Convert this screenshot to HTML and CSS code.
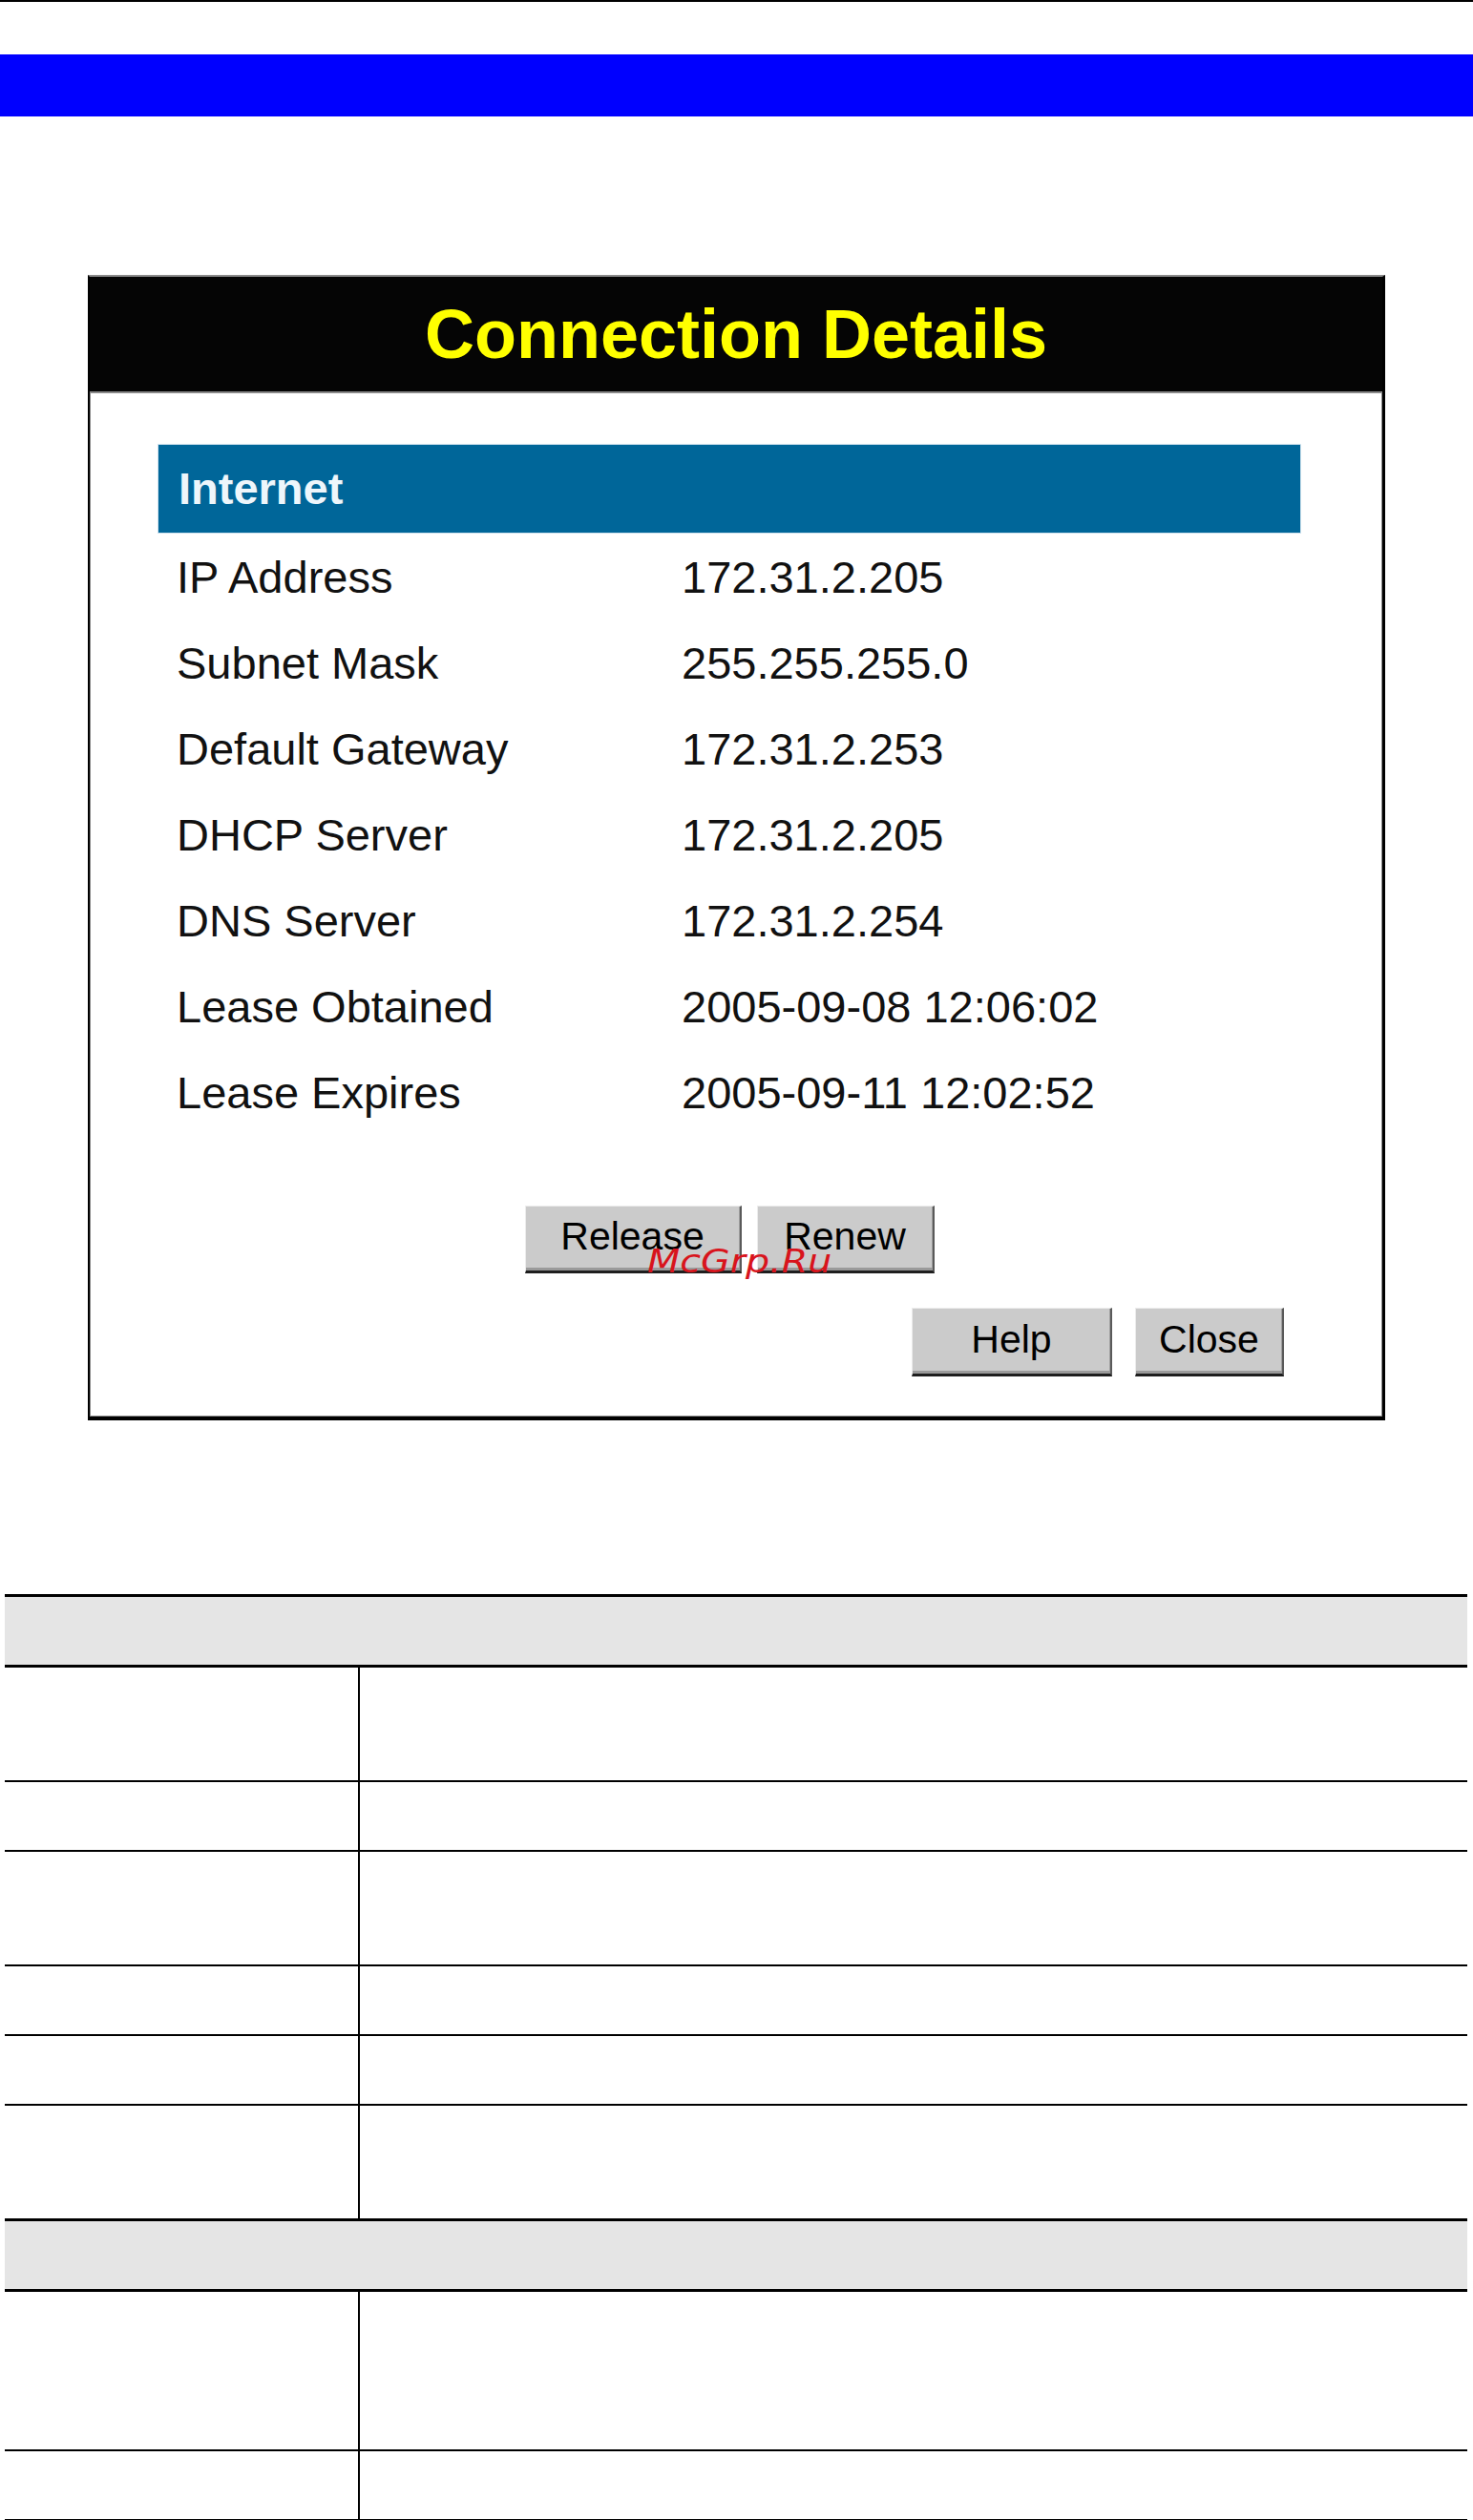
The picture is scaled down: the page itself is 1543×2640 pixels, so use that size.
FILE: index.html
```html
<!DOCTYPE html>
<html lang="en">
<head>
<meta charset="utf-8">
<title>Connection Details</title>
<link rel="stylesheet" href="styles.css">
</head>
<body>
<div class="topline"></div>
<div class="banner"></div>

<div class="dialog">
  <div class="dlg-head">Connection Details</div>
  <div class="dlg-body">
    <div class="section-bar">Internet</div>
    <div class="info">
      <div class="info-row"><span>IP Address</span><span>172.31.2.205</span></div>
      <div class="info-row"><span>Subnet Mask</span><span>255.255.255.0</span></div>
      <div class="info-row"><span>Default Gateway</span><span>172.31.2.253</span></div>
      <div class="info-row"><span>DHCP Server</span><span>172.31.2.205</span></div>
      <div class="info-row"><span>DNS Server</span><span>172.31.2.254</span></div>
      <div class="info-row"><span>Lease Obtained</span><span>2005-09-08 12:06:02</span></div>
      <div class="info-row"><span>Lease Expires</span><span>2005-09-11 12:02:52</span></div>
    </div>
    <div class="btn-row btn-row-center">
      <button class="btn btn-release">Release</button>
      <button class="btn btn-renew">Renew</button>
      <span class="watermark">McGrp.Ru</span>
    </div>
    <div class="btn-row btn-row-right">
      <button class="btn btn-help">Help</button>
      <button class="btn btn-close">Close</button>
    </div>
  </div>
</div>

<div class="spec">
  <div class="spec-head"></div>
  <div class="spec-row lines-2"><div class="c1"></div><div class="c2"></div></div>
  <div class="spec-row lines-1"><div class="c1"></div><div class="c2"></div></div>
  <div class="spec-row lines-2"><div class="c1"></div><div class="c2"></div></div>
  <div class="spec-row lines-1"><div class="c1"></div><div class="c2"></div></div>
  <div class="spec-row lines-1"><div class="c1"></div><div class="c2"></div></div>
  <div class="spec-row lines-2"><div class="c1"></div><div class="c2"></div></div>
  <div class="spec-head"></div>
  <div class="spec-row lines-3"><div class="c1"></div><div class="c2"></div></div>
  <div class="spec-row lines-1"><div class="c1"></div><div class="c2"></div></div>
</div>
</body>
</html>
```
FILE: styles.css
```css
* { box-sizing: border-box; }

html, body {
  margin: 0;
  padding: 0;
  background: #ffffff;
  font-family: "Liberation Sans", Arial, sans-serif;
  color: #000;
}

.topline {
  height: 2px;
  background: #000;
}

.banner {
  margin-top: 55px;
  height: 65px;
  background: #0000ff;
}

/* ---------- dialog ---------- */
.dialog {
  margin: 166px 0 0 92px;
  width: 1359px;
  height: 1200px;
  border-top: 2px solid #8a8a8a;
  border-left: 2px solid #000;
  border-right: 3px solid #000;
  border-bottom: 4px solid #000;
  background: #fff;
  box-shadow: inset 1px 0 0 #8a8a8a, inset -1px -1px 0 #8a8a8a;
  display: flex;
  flex-direction: column;
}

.dlg-head {
  height: 122px;
  background: #050505;
  border-bottom: 2px solid #8a8a8a;
  color: #ffff00;
  font-weight: bold;
  font-size: 72px;
  line-height: 120px;
  text-align: center;
}

.dlg-body {
  padding: 53px 85px 0 71px;
  display: flex;
  flex-direction: column;
}

.section-bar {
  height: 94px;
  background: #006699;
  border: 1px solid #cfe2ee;
  color: #eef6fb;
  font-weight: bold;
  font-size: 47px;
  line-height: 92px;
  padding-left: 21px;
}

.info {
  margin-top: 1px;
  display: flex;
  flex-direction: column;
}

.info-row {
  display: grid;
  grid-template-columns: 529px 1fr;
  padding-left: 20px;
  height: 90px;
  font-size: 47px;
  line-height: 90px;
  color: #111;
}

/* ---------- buttons ---------- */
.btn-row {
  display: flex;
  position: relative;
}

.btn-row-center {
  margin-top: 73px;
  justify-content: center;
  gap: 16px;
}

.btn-row-right {
  margin-top: 36px;
  justify-content: flex-end;
  gap: 24px;
  padding-right: 18px;
}

.btn {
  font-family: "Liberation Sans", Arial, sans-serif;
  font-size: 41px;
  color: #000;
  background: #cbcbcb;
  border-style: solid;
  border-width: 1px 2px 3px 1px;
  border-color: #ececec #5a5a5a #1e1e1e #ececec;
  box-shadow: inset 0 -3px 0 #9a9a9a, inset -1px 0 0 #a0a0a0;
  padding: 0 0 5px;
  line-height: 62px;
  height: 71px;
  text-align: center;
  margin: 0;
}

.btn-release { width: 227px; }
.btn-renew { width: 186px; }
.btn-help { width: 210px; height: 72px; }
.btn-close { width: 156px; height: 72px; }

.watermark {
  position: absolute;
  left: 513px;
  top: 42px;
  font-family: "DejaVu Sans", sans-serif;
  font-style: italic;
  font-size: 33px;
  line-height: 33px;
  color: #d8141c;
  transform: scaleX(1.2);
  transform-origin: left center;
  white-space: nowrap;
}

/* ---------- spec table ---------- */
.spec {
  margin: 182px 0 0 5px;
  width: 1532px;
  border-bottom: 2px solid #000;
}

.spec-head {
  height: 71px;
  background: #e5e5e5;
  border-top: 3px solid #000;
  border-bottom: 3px solid #000;
  box-sizing: content-box;
}

.spec-row {
  display: grid;
  grid-template-columns: 370px 1fr;
  border-top: 2px solid #000;
  box-sizing: content-box;
}

.spec-head + .spec-row { border-top: 0; }

.spec-row .c2 { border-left: 2px solid #000; }

.lines-1 { height: 71px; }
.lines-2 { height: 118px; }
.lines-3 { height: 165px; }
```
